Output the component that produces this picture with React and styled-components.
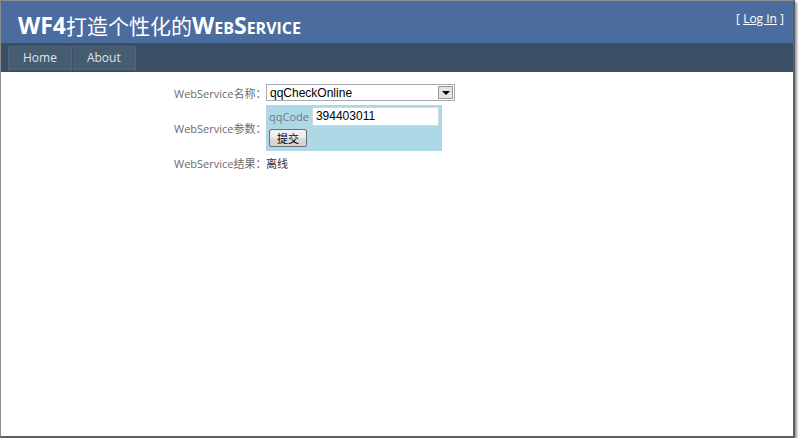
import React from 'react';
import styled, { createGlobalStyle } from 'styled-components';

const Global = createGlobalStyle`
  html, body {
    margin: 0;
    padding: 0;
    background: #fff;
  }
  body {
    font-family: "Open Sans", "Noto Sans CJK SC", sans-serif;
  }
`;

const Frame = styled.div`
  width: 792px;
  height: 435px;
  border-left: 1px solid #8c8c8c;
  border-top: 1px solid #8c8c8c;
  border-right: 2px solid #5e5e5e;
  border-bottom: 2px solid #5e5e5e;
  box-shadow: 2px 2px 2px #9a9a9a;
  display: flex;
  flex-direction: column;
  background: #fff;
  overflow: hidden;
`;

const Header = styled.div`
  background: #4b6c9e;
  height: 42px;
  display: flex;
  justify-content: space-between;
  align-items: flex-start;
  padding: 0 9px 0 17px;
`;

const Title = styled.h1`
  margin: 9px 0 0;
  color: #fff;
  font-size: 23px;
  font-weight: 700;
  font-variant: small-caps;
  line-height: 30px;
`;

const Cjk = styled.span`
  font-family: "Noto Sans CJK SC", sans-serif;
  font-weight: 400;
  font-size: 21px;
`;

const Login = styled.div`
  margin-top: 9px;
  color: #fff;
  font-size: 12px;
  a {
    color: #fff;
    text-decoration: underline;
  }
`;

const MenuBar = styled.div`
  background: #3a4f63;
  height: 29px;
  padding: 3px 0 0 7px;
  box-sizing: border-box;
  display: flex;
  align-items: flex-start;
`;

const MenuItem = styled.div`
  background: #465c71;
  border: 1px solid #4e6680;
  color: #dde4ec;
  font-size: 12px;
  height: 22px;
  line-height: 22px;
  padding: 0 ${p => p.pad}px;
  & + & {
    border-left: 1px solid #3a4f63;
  }
`;

const Main = styled.div`
  flex: 1;
  padding: 12px 0 0 173px;
`;

const Form = styled.div`
  display: grid;
  grid-template-columns: 88px auto;
  column-gap: 4px;
  row-gap: 4px;
  align-items: center;
  font-size: 11px;
`;

const Label = styled.div`
  text-align: right;
  color: #6b6b6b;
  white-space: nowrap;
`;

const Value = styled.div`
  color: #333;
`;

const Select = styled.div`
  width: 184px;
  height: 15px;
  border: 1px solid #a5acb2;
  display: flex;
  align-items: center;
  background: #fff;
  font-family: "Liberation Sans", Arial, sans-serif;
  font-size: 12px;
  color: #000;
  padding-left: 3px;
`;

const SelectText = styled.span`
  flex: 1;
`;

const Arrow = styled.div`
  width: 15px;
  height: 13px;
  margin-right: 1px;
  background: #e4e4e4;
  border: 1px solid #9a9a9a;
  box-sizing: border-box;
  display: flex;
  align-items: center;
  justify-content: center;
  &::after {
    content: '';
    border-left: 4px solid transparent;
    border-right: 4px solid transparent;
    border-top: 4px solid #000;
  }
`;

const ParamBox = styled.div`
  width: 170px;
  background: #add8e6;
  padding: 2px 3px 4px 3px;
`;

const ParamRow = styled.div`
  display: flex;
  align-items: center;
  gap: 3px;
`;

const ParamName = styled.span`
  color: #6a7a8a;
  font-size: 11px;
`;

const TextInput = styled.div`
  width: 124px;
  height: 17px;
  background: #fff;
  border: 1px solid #c9dbe2;
  font-family: "Liberation Sans", Arial, sans-serif;
  font-size: 12px;
  color: #000;
  line-height: 17px;
  padding-left: 3px;
`;

const Button = styled.button`
  margin-top: 3px;
  width: 38px;
  height: 18px;
  padding: 0;
  font-family: "Noto Sans CJK SC", sans-serif;
  font-size: 11px;
  line-height: 1;
  color: #000;
  border: 1px solid #707070;
  border-radius: 2px;
  background: linear-gradient(#f2f2f2, #ebebeb 50%, #dcdcdc 51%, #cfcfcf);
`;

const App = () => (
  <>
    <Global />
    <Frame>
      <Header>
        <Title>WF4<Cjk>打造个性化的</Cjk>WebService</Title>
        <Login>[ <a href="#login">Log In</a> ]</Login>
      </Header>
      <MenuBar>
        <MenuItem pad={14}>Home</MenuItem>
        <MenuItem pad={14}>About</MenuItem>
      </MenuBar>
      <Main>
        <Form>
          <Label>WebService名称：</Label>
          <Select>
            <SelectText>qqCheckOnline</SelectText>
            <Arrow />
          </Select>
          <Label>WebService参数：</Label>
          <ParamBox>
            <ParamRow>
              <ParamName>qqCode</ParamName>
              <TextInput>394403011</TextInput>
            </ParamRow>
            <Button>提交</Button>
          </ParamBox>
          <Label>WebService结果：</Label>
          <Value>离线</Value>
        </Form>
      </Main>
    </Frame>
  </>
);

export default App;
